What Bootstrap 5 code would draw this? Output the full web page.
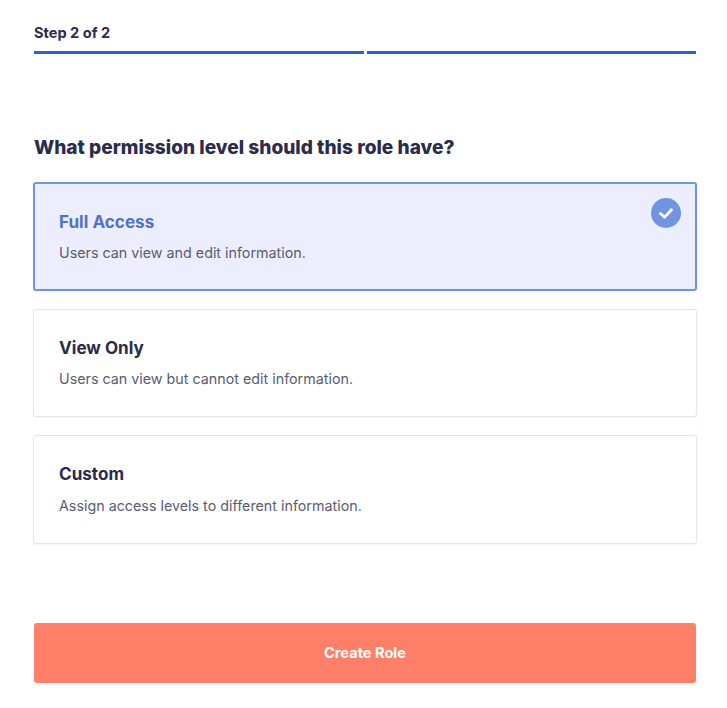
<!DOCTYPE html>
<html lang="en">
<head>
<meta charset="utf-8">
<title>Create Role</title>
<link href="https://cdn.jsdelivr.net/npm/bootstrap@5.3.0/dist/css/bootstrap.min.css" rel="stylesheet">
<style>
html,body{background:#fff;height:708px;overflow:hidden}
body{font-family:Inter,"Liberation Sans",sans-serif;color:#2a2c4a}
.page-wrap{padding:24px 31px 0 34px}
.step-label{font-size:14.6px;font-weight:700;line-height:18px;color:#2a2c4a;margin-bottom:9px}
.seg{height:3px;background:#2a62d6;flex:1 1 0}
.seg-gap{gap:3px}
.role-q{font-size:19.1px;font-weight:800;line-height:26px;margin:79.5px 0 22.5px;color:#2a2c4a}
.opt{height:108.5px;border:1px solid #dfe6f0;border-radius:3px;background:#fff;padding:27.4px 25px 0;margin:0 -1px 18px -1px;position:relative;box-shadow:0 1px 2px rgba(40,60,100,.06)}
.opt-on{background:#eceefd;border:2px solid #7094e2;padding:27px 24px 0}
.opt-title{font-size:17.1px;font-weight:700;line-height:22px;margin-bottom:10.2px;color:#2a2c4a}
.opt-on .opt-title{color:#5373c3}
.opt-desc{font-family:Inter,sans-serif;font-size:14.3px;line-height:20px;color:#5a5c70}
.tick{position:absolute;top:14px;right:14px;width:30px;height:30px;border-radius:50%;background:#7094e2}
.go{display:block;width:100%;height:60px;margin-top:79px;padding-top:8px;padding-bottom:6px;border:0;border-radius:3px;background:#ff7f69;color:#fff;font-size:14.6px;font-weight:700}
</style>
</head>
<body>
<div class="page-wrap">
  <div class="step-label">Step 2 of 2</div>
  <div class="d-flex seg-gap"><div class="seg"></div><div class="seg"></div></div>
  <h1 class="role-q">What permission level should this role have?</h1>
  <div class="opt opt-on">
    <div class="opt-title">Full Access</div>
    <div class="opt-desc">Users can view and edit information.</div>
    <svg class="tick" viewBox="0 0 30 30" aria-hidden="true"><path d="M9.5 15.5l4 3.8 7-7.6" fill="none" stroke="#fff" stroke-width="2.8" stroke-linecap="round" stroke-linejoin="round"/></svg>
  </div>
  <div class="opt">
    <div class="opt-title">View Only</div>
    <div class="opt-desc">Users can view but cannot edit information.</div>
  </div>
  <div class="opt">
    <div class="opt-title">Custom</div>
    <div class="opt-desc">Assign access levels to different information.</div>
  </div>
  <button class="go btn" type="button">Create Role</button>
</div>
<script src="https://cdn.jsdelivr.net/npm/bootstrap@5.3.0/dist/js/bootstrap.bundle.min.js"></script>
</body>
</html>
